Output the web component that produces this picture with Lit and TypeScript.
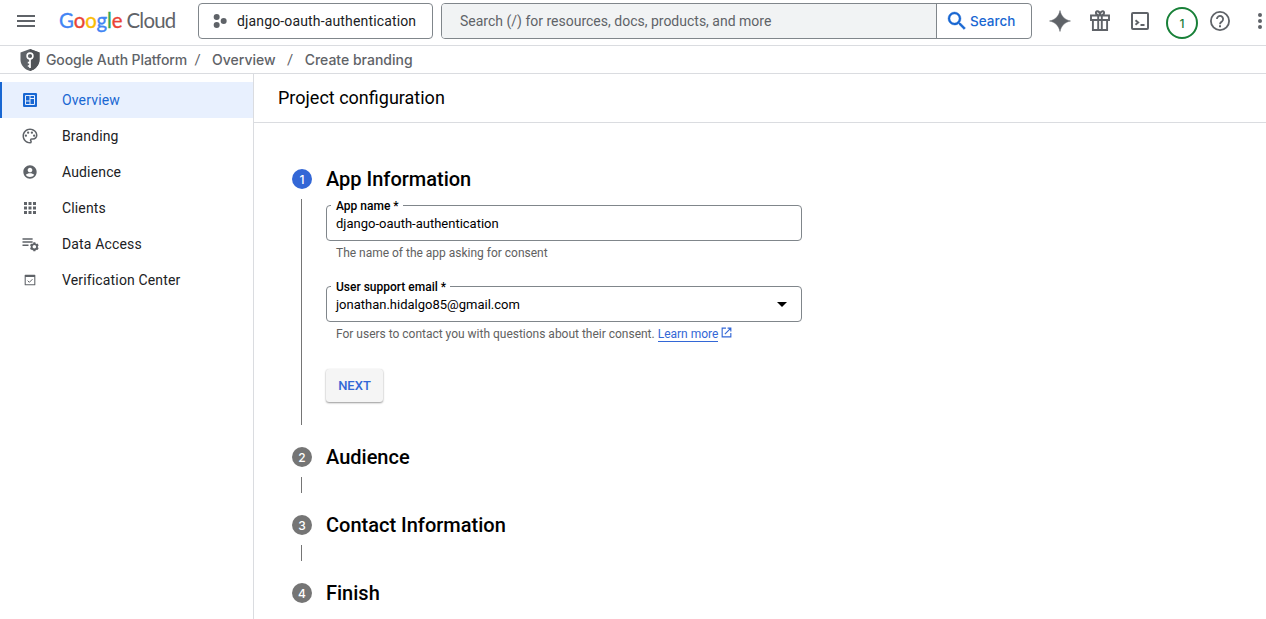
import { LitElement, html, svg, css } from "lit";
import { customElement, property } from "lit/decorators.js";

const icons: Record<string, unknown> = {
  overview: svg`<rect x="2.667" y="2.667" width="18.667" height="18.667" rx="1.500"/><path d="M6 6h12v12H6zM12 6v12M6 13.330h6M12 10h6" fill="none" stroke="#e8f0fe" stroke-width="1.330"/>`,
  branding: svg`<path d="M12 22C6.490 22 2 17.510 2 12S6.490 2 12 2s10 4.040 10 9c0 3.310-2.690 6-6 6h-1.770c-.28 0-.5.22-.5.500 0 .12.050.23.130.33.410.47.640 1.060.640 1.670A2.500 2.500 0 0 1 12 22zm0-18c-4.410 0-8 3.590-8 8s3.590 8 8 8c.28 0 .5-.22.500-.500a.54.54 0 0 0-.14-.35c-.41-.46-.63-1.050-.63-1.650a2.500 2.500 0 0 1 2.500-2.500H16c2.210 0 4-1.790 4-4 0-3.860-3.590-7-8-7z"/><circle cx="6.500" cy="11.500" r="1.500"/><circle cx="9.500" cy="7.500" r="1.500"/><circle cx="14.500" cy="7.500" r="1.500"/><circle cx="17.500" cy="11.500" r="1.500"/>`,
  audience: svg`<path fill-rule="evenodd" d="M12 2C6.480 2 2 6.480 2 12s4.480 10 10 10 10-4.480 10-10S17.520 2 12 2zm0 3.500c1.930 0 3.500 1.570 3.500 3.500S13.930 12.500 12 12.500 8.500 10.930 8.500 9 10.070 5.500 12 5.500zm0 14c-2.500 0-5-1.300-6.300-3.400.9-1.500 4.200-2.400 6.300-2.400s5.400.9 6.300 2.400C17 18.200 14.500 19.500 12 19.500z"/>`,
  clients: svg`<path d="M4 8h4V4H4v4zm6 12h4v-4h-4v4zm-6 0h4v-4H4v4zm0-6h4v-4H4v4zm6 0h4v-4h-4v4zm6-10v4h4V4h-4zm-6 4h4V4h-4v4zm6 6h4v-4h-4v4zm0 6h4v-4h-4v4z"/>`,
  data: svg`<path d="M2 4.200h13.500v2H2zM2 8.400h13.500v2H2zM2 12.600h8v2H2z"/><circle cx="17.800" cy="15.700" r="3.600" fill="none" stroke="currentColor" stroke-width="2.400"/><path d="M17.800 9.800v2.200M17.800 19.400v2.200M12.700 12.700l1.900 1.100M21 17.600l1.900 1.100M12.700 18.700l1.900-1.100M21 13.800l1.900-1.100" stroke="currentColor" stroke-width="2.800"/>`,
  verify: svg`<path fill-rule="evenodd" d="M5 4h14a1 1 0 0 1 1 1v14a1 1 0 0 1-1 1H5a1 1 0 0 1-1-1V5a1 1 0 0 1 1-1zM5.600 7.500v10.900h12.800V7.500z"/><path d="M8.500 13l2.500 2.500 4.700-4.700" fill="none" stroke="currentColor" stroke-width="1.500"/>`,
  menu: svg`<path d="M3 6h18v2H3zM3 11h18v2H3zM3 16h18v2H3z"/>`,
  hub: svg`<circle cx="7" cy="6" r="4.500"/><circle cx="7" cy="18" r="4.500"/><circle cx="17.500" cy="12" r="4.500"/>`,
  search: svg`<path d="M15.500 14h-.79l-.28-.27A6.470 6.470 0 0 0 16 9.500 6.500 6.500 0 1 0 9.500 16c1.610 0 3.090-.59 4.230-1.570l.27.280v.79l5 4.990L20.490 19l-4.990-5zm-6 0C7.010 14 5 11.990 5 9.500S7.010 5 9.500 5 14 7.010 14 9.500 11.990 14 9.500 14z" stroke="currentColor" stroke-width=".4"/>`,
  spark: svg`<path d="M12 1.500C13.200 7.200 16.800 10.800 22.500 12 16.800 13.200 13.200 16.800 12 22.500 10.800 16.800 7.200 13.200 1.500 12 7.200 10.800 10.800 7.200 12 1.500z" stroke="currentColor" stroke-width=".5"/>`,
  gift: svg`<path d="M3 6.500h18v4.500H3zM4.900 11v10h14.200V11M10.200 6.500V21M13.800 6.500V21M10.500 6C7.300 6 7.300 2.300 9.200 2.300 11 2.300 12 4 12 6c0-2 1-3.700 2.800-3.700 1.900 0 1.900 3.700-1.300 3.700" fill="none" stroke="currentColor" stroke-width="1.900"/>`,
  shell: svg`<rect x="4" y="4" width="16" height="16" rx="1" fill="none" stroke="currentColor" stroke-width="2"/><path d="M7.500 11.200l2.700 2.300-2.700 2.300M12.500 16h4" fill="none" stroke="currentColor" stroke-width="1.900"/>`,
  help: svg`<circle cx="12" cy="12" r="9.100" fill="none" stroke="currentColor" stroke-width="1.800"/><path d="M8.900 10a3.100 3.100 0 1 1 5.200 2.300c-1.100 1-2.100 1.500-2.100 3" fill="none" stroke="currentColor" stroke-width="1.800"/><path d="M11 16.300h2v2h-2z"/>`,
  more: svg`<circle cx="12" cy="6" r="2"/><circle cx="12" cy="12" r="2"/><circle cx="12" cy="18" r="2"/>`,
  shield: svg`<path d="M12 1l9.500 3.500v7.200c0 5.300-4.100 9.800-9.500 11.300-5.400-1.500-9.500-6-9.500-11.300V4.500z"/><path d="M12 1l9.500 3.500v7.200c0 5.300-4.100 9.800-9.500 11.300z" fill="#505357"/><circle cx="12" cy="8" r="2.900" fill="none" stroke="#fff" stroke-width="1.600"/><path d="M12 10.800V20M12 14.700H9.800M12 18H9.800" fill="none" stroke="#fff" stroke-width="1.700"/>`,
  open: svg`<path d="M11 4H4v16h16v-7M14 4h6v6M20 4L9 15" fill="none" stroke="currentColor" stroke-width="2.100"/>`,
};

const icon = (name: string, size: number) =>
  html`<svg viewBox="0 0 24 24" width=${size} height=${size} fill="currentColor" aria-hidden="true">${icons[name]}</svg>`;

const shared = css`
  * { box-sizing: border-box; }
  svg { display: block; flex: none; }
`;

@customElement("top-bar")
class TopBar extends LitElement {
  static styles = [shared, css`
    :host { display: block; color: #5f6368; }
    .bar { height: 46px; border-bottom: 1px solid #dadce0; display: flex; align-items: flex-start; overflow: hidden; }
    .bar > * { flex: none; }
    .menu { padding: 9px 0 0 14px; width: 59px; }
    .logo { width: 139px; padding-top: 7px; font: 400 20.4px/27px Lato, sans-serif; white-space: nowrap; letter-spacing: -.75px; }
    .google { letter-spacing: -.1px; margin-right: 4px; -webkit-text-stroke: .35px currentColor; }
    .b { color: #4285f4; } .r { color: #ea4335; } .y { color: #fbbc04; } .g { color: #34a853; }
    .project { margin-top: 3px; width: 235px; height: 36px; border: 1px solid #80868b; border-radius: 4px; display: flex; align-items: center; padding-left: 13px; gap: 9px; font-size: 14px; letter-spacing: .15px; }
    .project span { color: #202124; }
    .search { margin: 3px 0 0 8px; width: 591px; height: 36px; border: 1px solid #80868b; border-radius: 4px; display: flex; overflow: hidden; }
    .query { flex: none; width: 495px; background: #f1f3f4; border-right: 1px solid #80868b; padding-left: 18px; font-size: 14px; line-height: 34px; }
    .go { display: flex; align-items: center; padding-left: 8px; gap: 1px; color: #1967d2; font: 500 13.5px/20px Inter, sans-serif; }
    .tools { display: flex; margin-left: 16px; padding-top: 9px; gap: 16px; }
    .badge { width: 32px; height: 32px; margin: -2px -6px 0 -2px; border: 2px solid #188038; border-radius: 50%; display: flex; align-items: center; justify-content: center; color: #188038; font: 500 12px/12px Inter, sans-serif; padding-top: 2px; }
  `];
  render() {
    return html`<header class="bar">
      <div class="menu">${icon("menu", 24)}</div>
      <div class="logo"><span class="google"><span class="b">G</span><span class="r">o</span><span class="y">o</span><span class="b">g</span><span class="g">l</span><span class="r">e</span></span><span>Cloud</span></div>
      <div class="project">${icon("hub", 16)}<span>django-oauth-authentication</span></div>
      <div class="search"><div class="query">Search (/) for resources, docs, products, and more</div><div class="go">${icon("search", 24)}<span>Search</span></div></div>
      <div class="tools">${icon("spark", 24)}${icon("gift", 24)}${icon("shell", 24)}<div class="badge">1</div>${icon("help", 24)}${icon("more", 24)}</div>
    </header>`;
  }
}

@customElement("crumb-bar")
class CrumbBar extends LitElement {
  static styles = [shared, css`
    :host { display: block; }
    .bar { height: 28px; border-bottom: 1px solid #dadce0; display: flex; align-items: center; padding-left: 18px; color: #5f6368; font: 500 14px/20px Inter, sans-serif; letter-spacing: -.1px; white-space: nowrap; }
    .crumb { letter-spacing: 0; }
    .crumb.first { margin-left: 4px; letter-spacing: -.1px; }
    .slash { width: 29px; text-align: center; font: 400 15px/20px Roboto, sans-serif; }
    .first + .slash { width: 25px; padding-right: 4px; }
  `];
  render() {
    return html`<nav class="bar">${icon("shield", 24)}<span class="crumb first">Google Auth Platform</span><span class="slash">/</span><span class="crumb">Overview</span><span class="slash">/</span><span class="crumb">Create branding</span></nav>`;
  }
}

@customElement("side-nav")
class SideNav extends LitElement {
  static styles = [shared, css`
    :host { display: block; width: 254px; border-right: 1px solid #dadce0; padding-top: 8px; box-sizing: border-box; flex: none; }
    .item { height: 36px; display: flex; align-items: center; border-left: 2px solid transparent; color: #5f6368; font-size: 14px; letter-spacing: .15px; }
    .mark { width: 56px; display: flex; justify-content: center; }
    .label { color: #202124; padding-left: 4px; }
    .active { background: #e8f0fe; border-left-color: #1967d2; color: #1967d2; }
    .active .label { color: #1967d2; }
  `];
  render() {
    const items: [string, string, number][] = [
      ["overview", "Overview", 18], ["branding", "Branding", 18], ["audience", "Audience", 16],
      ["clients", "Clients", 18], ["data", "Data Access", 18], ["verify", "Verification Center", 16],
    ];
    return html`${items.map(([i, t, s], n) => html`<div class="item ${n === 0 ? "active" : ""}"><span class="mark">${icon(i, s)}</span><span class="label">${t}</span></div>`)}`;
  }
}

@customElement("step-item")
class StepItem extends LitElement {
  @property() num = "";
  @property() heading = "";
  @property({ type: Boolean }) current = false;
  @property({ type: Boolean }) last = false;
  static styles = [shared, css`
    :host { display: block; }
    .head { display: flex; align-items: center; height: 20px; gap: 14px; }
    .dot { width: 20px; height: 20px; border-radius: 50%; background: #757575; color: #fff; display: flex; align-items: center; justify-content: center; font: 500 12px/20px Inter, sans-serif; padding-top: 1px; }
    .dot.on { background: #3367d6; }
    .title { font-size: 20px; font-weight: 500; line-height: 24px; color: #000; }
    .body { margin: 10px 0 22px 9px; min-height: 16px; border-left: 1px solid #757575; padding-left: 24px; }
  `];
  render() {
    return html`<div class="head"><span class="dot ${this.current ? "on" : ""}">${this.num}</span><span class="title">${this.heading}</span></div>
      ${this.last ? "" : html`<div class="body"><slot></slot></div>`}`;
  }
}

@customElement("app-root")
class AppRoot extends LitElement {
  static styles = [shared, css`
    :host { display: block; height: 619px; overflow: hidden; background: #fff; font-family: Roboto, sans-serif; }
    .page { display: flex; height: 545px; }
    .main { flex: 1; min-width: 0; }
    .title { height: 49px; border-bottom: 1px solid #dadce0; padding-left: 24px; font-size: 18px; line-height: 48px; color: #000; }
    .steps { padding: 46px 0 0 38px; }
    .form { height: 226px; padding-top: 6px; }
    .field { padding: 0 24px 0 9px; width: 476px; height: 36px; border: 1px solid #80868b; border-radius: 4px; font-size: 13px; color: #000; display: flex; align-items: center; justify-content: space-between; position: relative; }
    .legend { position: absolute; left: 4px; top: -8px; padding: 0 4px 0 5px; background: #fff; font-size: 12px; line-height: 16px; font-weight: 500; }
    .arrow { border: 5px solid transparent; border-top-color: #000; border-bottom: 0; margin-right: -10px; }
    .hint { display: flex; padding-left: 10px; margin: 4px 0 25px; height: 16px; font-size: 12px; line-height: 16px; color: #616161; letter-spacing: -.01px; }
    .link { color: #3367d6; border-bottom: 1px solid #3367d6; margin: 0 2px 0 3px; height: 16px; }
    .out { color: #3367d6; }
    .next { display: flex; align-items: center; justify-content: center; width: 57px; height: 33px; margin-top: 27px; border-radius: 3px; background: #f5f5f5; box-shadow: 0 1px 2px rgba(0,0,0,.4), 0 0 1px rgba(0,0,0,.08); color: #3367d6; font-size: 13px; font-weight: 500; }
  `];
  render() {
    return html`<top-bar></top-bar><crumb-bar></crumb-bar>
      <div class="page"><side-nav></side-nav><main class="main">
        <div class="title">Project configuration</div>
        <div class="steps">
          <step-item num="1" heading="App Information" current><div class="form">
            <div class="field"><span class="legend">App name *</span><span>django-oauth-authentication</span></div>
            <div class="hint">The name of the app asking for consent</div>
            <div class="field"><span class="legend">User support email *</span><span>jonathan.hidalgo85@gmail.com</span><span class="arrow"></span></div>
            <div class="hint"><span>For users to contact you with questions about their consent.</span><span class="link">Learn more</span><span class="out">${icon("open", 13)}</span></div>
            <div class="next">NEXT</div>
          </div></step-item>
          <step-item num="2" heading="Audience"></step-item>
          <step-item num="3" heading="Contact Information"></step-item>
          <step-item num="4" heading="Finish" last></step-item>
        </div>
      </main></div>`;
  }
}
